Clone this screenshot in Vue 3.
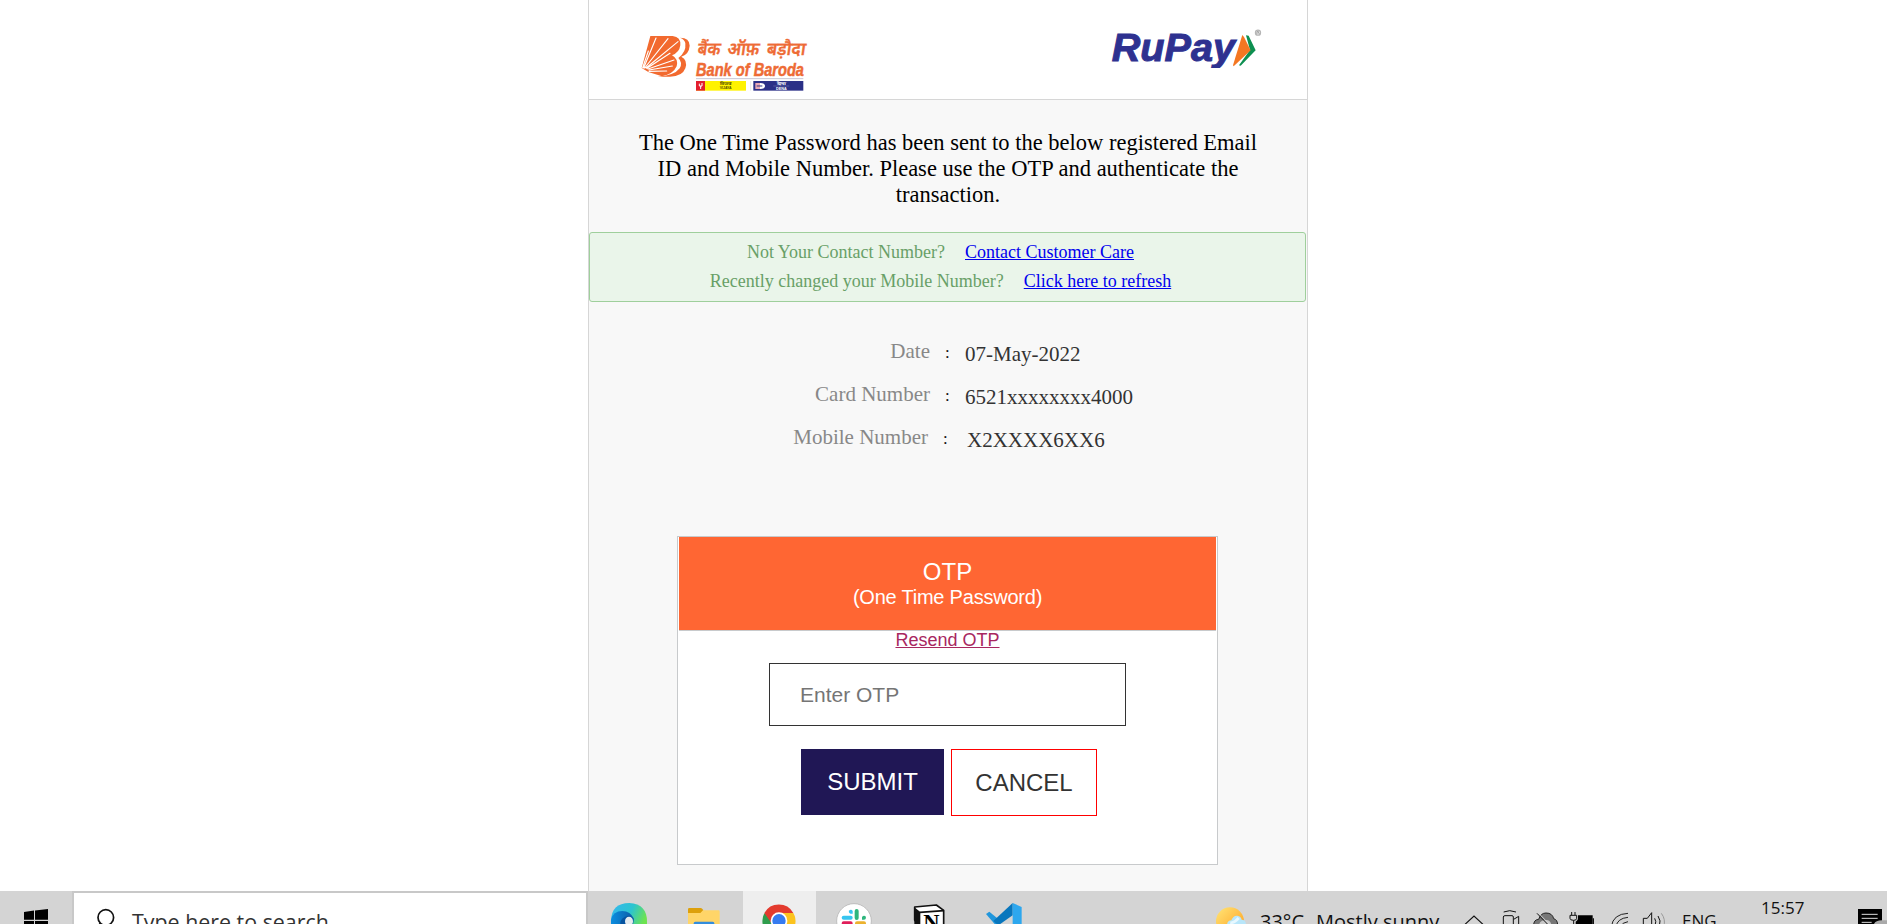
<script setup>
const details = [
  { label: 'Date', value: '07-May-2022' },
  { label: 'Card Number', value: '6521xxxxxxxx4000' },
  { label: 'Mobile Number', value: 'X2XXXX6XX6', wide: true },
]
</script>

<template>
  <div class="screen">
    <main class="page">
      <header class="brands">
        <svg class="bob" viewBox="150 90 550 200" width="183.33" height="66.67">
          <path d="M300 113Q329 113 329 137Q327 163 304 170Q324 180 316 205Q307 230 270 230H233Q283 227 299 205Q309 188 295 174Q319 157 316 130Q315 119 300 113Z" fill="#f26a2f" />
          <path d="M211 108H278Q303 111 301 136Q298 158 276 166Q296 177 290 199Q280 222 246 229L205 216L185 204Z" fill="#f26a2f" />
          <g stroke="#fff" stroke-width="3.4" stroke-linecap="round">
            <path d="M188 203L205 153M191 204L228 114M194 204L264 116M198 204L294 125M201 205L270 160M204 207L282 180M207 210L277 198M207 214L260 213" />
          </g>
          <g fill="#ee6b35" stroke="#ee6b35" stroke-width="1">
            <g class="hindi" transform="translate(0 164) skewX(-8)">
              <text x="351" y="0" textLength="68" lengthAdjust="spacingAndGlyphs">बैंक</text>
              <text x="440" y="0" textLength="96" lengthAdjust="spacingAndGlyphs">ऑफ़</text>
              <text x="559" y="0" textLength="116" lengthAdjust="spacingAndGlyphs">बड़ौदा</text>
            </g>
            <text class="english" x="348" y="228" textLength="324" lengthAdjust="spacingAndGlyphs">Bank of Baroda</text>
          </g>
          <path d="M348 236H670" stroke="#c9c5d2" stroke-width="3" />
          <rect x="348" y="243" width="150" height="29" fill="#fff200" />
          <rect x="348" y="243" width="27" height="29" fill="#e31e2f" />
          <path d="M358 251V258H366V249M362 258V267" stroke="#fff" stroke-width="3" fill="none" />
          <path d="M512 243V272" stroke="#ddd" stroke-width="2" />
          <rect x="520" y="243" width="150" height="29" fill="#2b3087" />
          <path d="M526 249H540V267H526Z" fill="#e9a9b5" /><path d="M540 249Q555 249 555 258Q555 267 540 267Z" fill="#fff" />
          <path d="M530 258H547" stroke="#2b3087" stroke-width="3" />
          <g class="tiny">
            <text x="419" y="255" fill="#554d00" textLength="36" lengthAdjust="spacingAndGlyphs">विजया</text>
            <text x="419" y="268" fill="#554d00" textLength="36" lengthAdjust="spacingAndGlyphs">VIJAYA</text>
            <text x="590" y="255" fill="#fff" textLength="28" lengthAdjust="spacingAndGlyphs">देना</text>
            <text x="588" y="269" fill="#fff" textLength="32" lengthAdjust="spacingAndGlyphs">DENA</text>
          </g>
          <path d="M580 258H628" stroke="#aaaed2" stroke-width="1" />
        </svg>
        <svg class="rupay" viewBox="180 80 460 124" width="153.33" height="41.33">
          <text class="rupay-word" x="185" y="181" textLength="370" lengthAdjust="spacingAndGlyphs">RuPay</text>
          <path d="M588 105L596 106L617 150L572 196L567 195L600 149Z" fill="#0d8f50" />
          <path d="M577 104L582 110L602 150L551 198L549 195Z" fill="#f47722" />
          <circle cx="624" cy="97" r="7.5" fill="none" stroke="#b5b5b5" stroke-width="4" />
          <path d="M621 101V94H626V98L628 101" fill="none" stroke="#999" stroke-width="3" />
        </svg>
      </header>

      <p class="prompt">
        <span>The One Time Password has been sent to the below registered Email</span><br />
        <span>ID and Mobile Number. Please use the OTP and authenticate the</span><br />
        <span>transaction.</span>
      </p>

      <section class="notice">
        <div><span>Not Your Contact Number?</span><a href="#">Contact Customer Care</a></div>
        <div><span>Recently changed your Mobile Number?</span><a href="#">Click here to refresh</a></div>
      </section>

      <section class="details">
        <div v-for="d in details" :key="d.label" class="detail" :class="{ wide: d.wide }">
          <span class="label">{{ d.label }}</span>
          <span class="colon">:</span>
          <span class="value">{{ d.value }}</span>
        </div>
      </section>

      <section class="otp">
        <div class="otp-head">
          <div class="otp-title">OTP</div>
          <div class="otp-sub">(One Time Password)</div>
        </div>
        <a class="resend" href="#">Resend OTP</a>
        <input class="otp-input" type="text" placeholder="Enter OTP" />
        <div class="actions">
          <button class="submit">SUBMIT</button>
          <button class="cancel">CANCEL</button>
        </div>
      </section>
    </main>

    <footer class="taskbar">
      <svg class="start" width="72" height="33" viewBox="0 891 72 33">
        <path d="M24 912L34 910.6V919.8H24ZM35 910.4L48 909V919.8H35ZM24 921H34V930H24ZM35 921H48V930H35Z" />
      </svg>
      <div class="search">
        <svg width="58" height="31" viewBox="74 893 58 31">
          <circle cx="105.8" cy="917.5" r="7.8" fill="none" stroke="#111" stroke-width="1.7" />
          <path d="M100.5 923L96 929" stroke="#111" stroke-width="1.7" />
        </svg>
        <span>Type here to search</span>
      </div>

      <svg width="82" height="33" viewBox="24 63 246 99">
        <defs>
          <linearGradient id="edge-top" x1="0" x2="1" y1="0.2" y2="0.5"><stop offset="0" stop-color="#35b8ed" /><stop offset=".55" stop-color="#2cc4cf" /><stop offset="1" stop-color="#6de34f" /></linearGradient>
          <linearGradient id="edge-low" x1="0" x2="1"><stop offset="0" stop-color="#0b8ee0" /><stop offset="1" stop-color="#0b5aa5" /></linearGradient>
        </defs>
        <path d="M93 153Q94 99 148 99Q201 102 201 155V170H150Z" fill="url(#edge-top)" />
        <path d="M93 170V149Q99 123 127 123Q151 124 162 146L158 170Z" fill="url(#edge-low)" />
        <path d="M121 170Q117 141 146 137Q159 139 159 153V170Z" fill="#0754a0" />
        <ellipse cx="147" cy="154" rx="12" ry="14" fill="#e5ebef" />
      </svg>
      <svg width="73" height="33" viewBox="270 63 219 99">
        <path d="M324 118Q324 114 328 114H362Q366 114 369 119L372 130H324Z" fill="#dda00b" />
        <path d="M324 129H361L369 121H416Q419 121 419 125V170H324Z" fill="#ffd568" />
        <path d="M341 170V160Q341 155 346 155H398Q403 155 403 160V170Z" fill="#338ddd" />
      </svg>
      <svg class="active" width="73" height="33" viewBox="489 63 219 99">
        <path d="M553 130A50 50 0 0 0 568 194L598 152Z" fill="#2f9d4d" />
        <path d="M553 129A50 50 0 0 1 640 129H597L574 159Z" fill="#e33b2e" />
        <path d="M597 129H640A50 50 0 0 1 646 162H610Z" fill="#fcc31e" />
        <circle cx="597" cy="152" r="25" fill="#fff" /><circle cx="597" cy="152" r="20" fill="#367bf0" />
      </svg>
      <svg width="74" height="33" viewBox="708 63 222 99">
        <circle cx="822" cy="153" r="52" fill="#fff" stroke="#aaa" stroke-width="2" />
        <g fill="none" stroke-width="12" stroke-linecap="round">
          <path d="M791 143H812" stroke="#36c5f0" /><path d="M830 123V144" stroke="#2eb67d" />
          <path d="M791 160H812" stroke="#e01e5a" /><path d="M831 160H852" stroke="#ecb22e" />
        </g>
        <path d="M818 131H811A6 6 0 1 1 818 123Z" fill="#36c5f0" />
        <path d="M846 149V142A6 6 0 1 1 852 149Z" fill="#2eb67d" />
      </svg>
      <svg width="70" height="33" viewBox="930 63 210 99">
        <path d="M1004 111L1069 105L1091 121V170H1018L1004 150Z" fill="#fff" stroke="#111" stroke-width="5" stroke-linejoin="round" />
        <path d="M1003 112L1021 126V170H1003Z" fill="#111" />
        <path d="M1019 127L1092 122" stroke="#111" stroke-width="5" />
        <text class="notion" x="1030" y="181" textLength="49" lengthAdjust="spacingAndGlyphs">N</text>
      </svg>
      <svg width="80" height="33" viewBox="1140 63 240 99">
        <path d="M1218 132L1228 125L1262 153L1250 169Z" fill="#2096dc" />
        <path d="M1298 99L1240 153L1255 166L1298 136Z" fill="#0876bd" />
        <path d="M1298 99L1325 111V170H1298Z" fill="#2da7ee" />
      </svg>

      <svg class="weather" width="50" height="33" viewBox="60 63 150 99">
        <defs><linearGradient id="sun" x2="1" y2="1"><stop stop-color="#ffe577" /><stop offset="1" stop-color="#ff9e1b" /></linearGradient></defs>
        <circle cx="120" cy="154" r="42" fill="url(#sun)" />
        <path d="M111 165Q112 151 124 151Q129 136 142 137Q153 138 155 149Q168 149 168 165Z" fill="#b8e6fa" />
        <path d="M121 158Q132 160 146 144" stroke="#e7f8ff" stroke-width="8" fill="none" />
      </svg>
      <span class="forecast"><span>33°C</span><span>Mostly sunny</span></span>
      <svg width="30" height="33" viewBox="810 63 90 99"><path d="M825 163L852 138L879 163" fill="none" stroke="#111" stroke-width="3.5" /></svg>
      <svg width="35" height="33" viewBox="900 63 105 99">
        <path d="M941 126Q959 118 978 126M940 170V141Q940 137 945 137H966Q970 137 970 141V170M971 148L986 139V170" fill="none" stroke="#111" stroke-width="3" />
      </svg>
      <svg width="37" height="33" viewBox="-45 63 111 99">
        <path d="M-19 168Q-20 149 -4 148Q2 129 18 129Q37 129 41 146Q53 149 53 166Z" fill="#777" stroke="#222" stroke-width="3" />
        <path d="M-3 168Q-2 151 16 150Q32 148 35 168Z" fill="#c7c7c7" />
        <path d="M-4 130L36 171" stroke="#d4d4d4" stroke-width="3" /><path d="M-9 130L31 171" stroke="#111" stroke-width="3" />
      </svg>
      <svg width="40" height="33" viewBox="66 63 120 99">
        <path d="M95 126V135M105 126V135M90 136H110V145Q110 151 101 151Q90 151 90 145ZM101 151V170" fill="none" stroke="#111" stroke-width="3" />
        <path d="M114 136H158V170H107V155Q114 153 114 145Z" /><path d="M160 145V162" stroke="#111" stroke-width="4" />
      </svg>
      <svg width="34" height="33" viewBox="186 63 102 99">
        <g fill="none" stroke="#222" stroke-width="3"><path d="M214 170Q219 132 264 130M228 170Q232 145 264 142M241 170Q247 157 264 155" /></g>
      </svg>
      <svg width="34" height="33" viewBox="288 63 102 99">
        <path d="M310 170V145H322L335 128V170M344 145Q350 153 345 168M354 138Q364 151 358 170" fill="none" stroke="#111" stroke-width="3" />
        <path d="M364 130Q378 148 371 170" fill="none" stroke="#999" stroke-width="3" />
      </svg>
      <span class="lang">ENG</span>
      <span class="clock">15:57</span>
      <svg width="33" height="33" viewBox="942 63 99 99">
        <path d="M954 117H1026V170H954Z" /><path d="M965 133H1013M965 145H1013M965 157H995" stroke="#ddd" stroke-width="3" />
        <path d="M1000 170Q1001 151 1026 151H1041V170Z" fill="#aaa" />
      </svg>
    </footer>
  </div>
</template>

<style>
body { margin: 0; overflow: hidden; background: #fff; }
</style>

<style scoped>
.screen { height: 924px; display: flex; flex-direction: column; overflow: hidden; font-family: "Liberation Serif", serif; }
.screen * { box-sizing: border-box; }
.page { width: 720px; height: 891px; margin-left: 588px; background: #f8f8f8; border: solid #d6d6d6; border-width: 0 1px; }
.brands { height: 100px; background: #fff; border-bottom: 1px solid #d6d6d6; display: flex; justify-content: space-between; padding: 30px 44px 0 41px; }
.rupay { margin-top: -3.33px; }
.hindi { font: 600 54px "Noto Sans", "Noto Sans Devanagari", sans-serif; }
.english { font: italic bold 53px "Liberation Sans Narrow", "Liberation Sans", sans-serif; stroke-width: 1.5px; }
.tiny { font: bold 12px "Liberation Sans", sans-serif; }
.rupay-word { font: italic bold 119px "Liberation Sans", sans-serif; fill: #2e3190; stroke: #2e3190; stroke-width: 3px; }
.prompt { margin: 30px 0 0; text-align: center; font-size: 22.5px; line-height: 26px; color: #000; white-space: nowrap; }
.notice { margin-top: 24px; margin-right: 1px; height: 70px; padding: 5px 14px 5px 0; border: 1px solid #9fcf9c; border-radius: 3px; background: #eaf5ea; color: #68a067; font-size: 18px; line-height: 29px; }
.notice div { display: flex; justify-content: center; gap: 20px; }
.notice a { color: #0000ee; }
.details { padding-top: 28px; font-size: 21px; }
.detail { display: grid; grid-template-columns: 341px 35px 1fr; height: 43px; line-height: 43px; }
.label { text-align: right; color: #888; }
.colon { padding-left: 15px; font-size: 17px; line-height: 45px; color: #111; }
.value { padding-top: 3px; color: #333; }
.wide { grid-template-columns: 339px 39px 1fr; }
.otp { width: 541px; height: 329px; margin: 77px 0 0 88px; background: #fff; border: 1px solid #c8cacc; padding: 0 1px; display: flex; flex-direction: column; align-items: center; font-family: "Liberation Sans", Arial, sans-serif; }
.otp-head { width: 100%; height: 94px; flex: none; background: #ff6633; border-bottom: 1px solid #c8cacc; color: #fff; text-align: center; padding-top: 21px; }
.otp-title { font-size: 24px; line-height: 27px; }
.otp-sub { font-size: 20px; line-height: 24px; letter-spacing: -0.22px; }
.resend { font-size: 18px; line-height: 18px; color: #a8275f; }
.otp-input { margin: 14px 0 0; width: 357px; height: 63px; border: 1px solid #333; padding: 0 31px 0 30px; font: 21px "Liberation Sans", Arial, sans-serif; background: #fff; outline: 0; }
.otp-input::placeholder { color: #757575; }
.actions { margin-top: 23px; padding-left: 3px; display: flex; align-items: flex-start; gap: 7px; }
.actions button { margin: 0; padding: 0; border-radius: 0; font: 24px "Liberation Sans", Arial, sans-serif; }
.submit { width: 143px; height: 66px; border: 0; background: #201755; color: #fff; }
.cancel { width: 146px; height: 67px; border: 1px solid #f00; background: #fff; color: #333; }
.taskbar { height: 33px; display: flex; align-items: flex-start; background: #d4d4d4; overflow: hidden; font-family: "Open Sans", "Noto Sans", sans-serif; color: #111; }
.taskbar > * { flex: none; }
.search { width: 516px; height: 33px; border: solid #c8c8c8; border-width: 2px 2px 0; background: #fff; display: flex; font-size: 21.4px; line-height: 40px; padding-top: 9px; color: #333; }
.search svg { margin-top: -9px; }
.active { background: #eee; }
.notion { font: bold 68px "Liberation Serif", serif; }
.weather { margin-left: 170px; }
.forecast { width: 200px; display: flex; gap: 12px; font-size: 20px; line-height: 32px; padding-top: 15px; }
.lang { width: 80px; padding: 17px 0 0 12px; font-size: 17px; line-height: 25px; }
.clock { width: 104px; padding: 5px 0 0 11px; font-size: 17px; line-height: 24px; }
</style>
